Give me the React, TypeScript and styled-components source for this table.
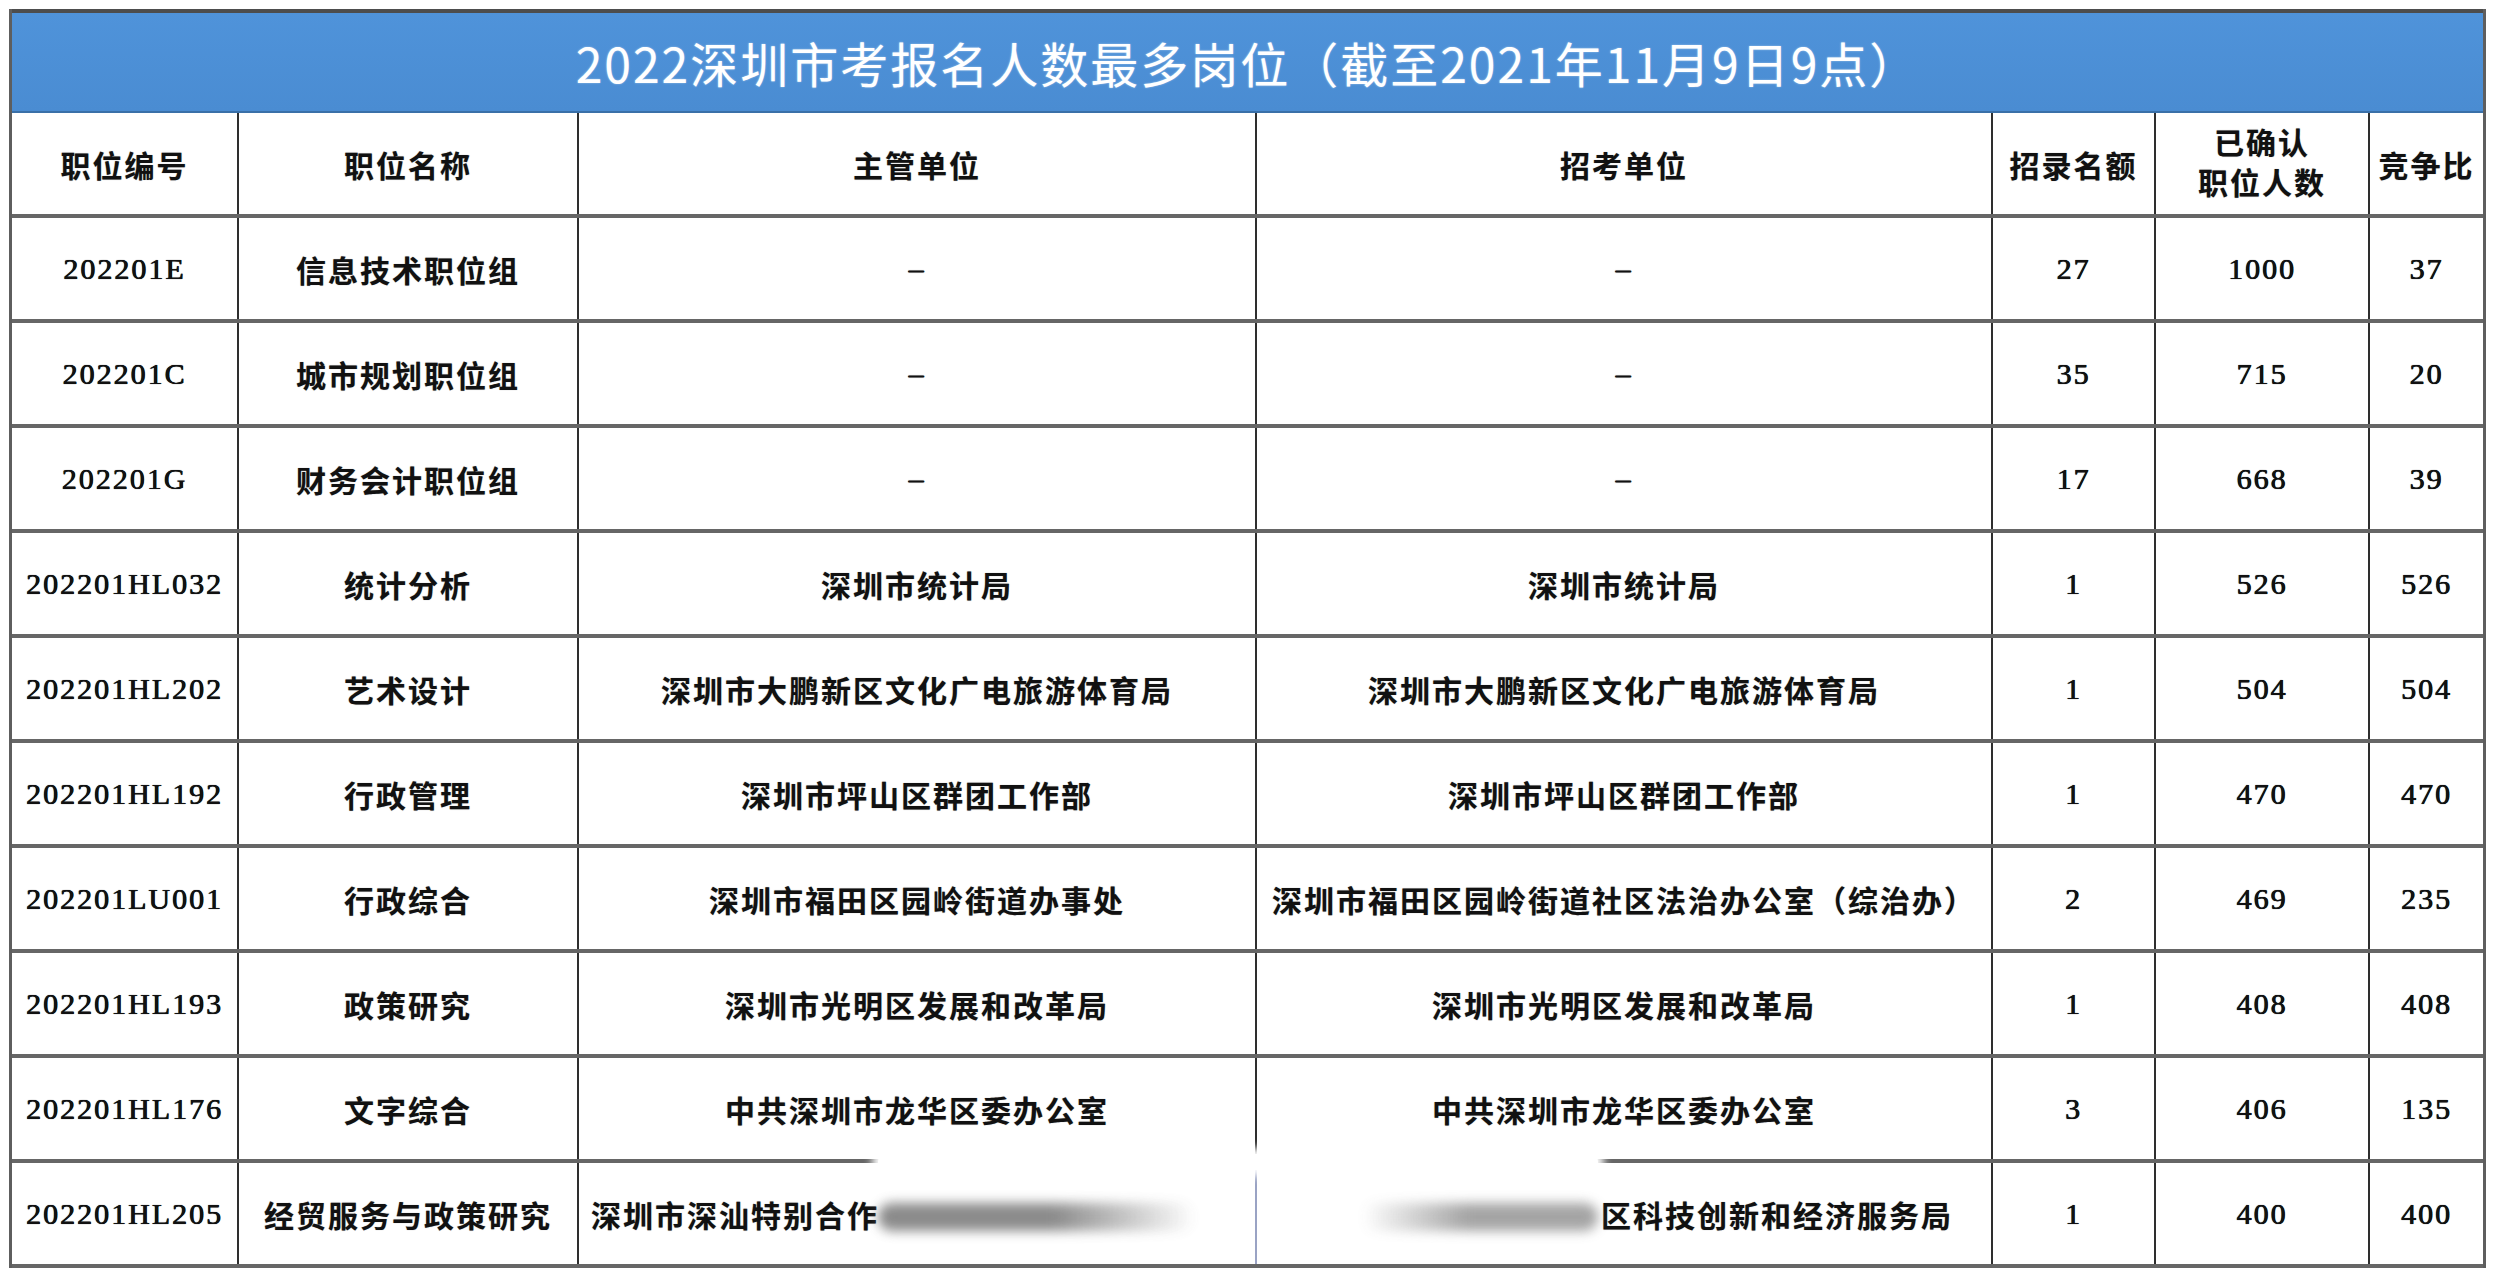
import styled, {createGlobalStyle} from "styled-components";

type Align = "center" | "left" | "right";

type RowData = {
    code: string
    name: string
    dept: string
    unit: string
    quota: string
    confirmed: string
    ratio: string
}

const rows: RowData[] = [
    {code: "202201E", name: "信息技术职位组", dept: "–", unit: "–", quota: "27", confirmed: "1000", ratio: "37"},
    {code: "202201C", name: "城市规划职位组", dept: "–", unit: "–", quota: "35", confirmed: "715", ratio: "20"},
    {code: "202201G", name: "财务会计职位组", dept: "–", unit: "–", quota: "17", confirmed: "668", ratio: "39"},
    {code: "202201HL032", name: "统计分析", dept: "深圳市统计局", unit: "深圳市统计局", quota: "1", confirmed: "526", ratio: "526"},
    {
        code: "202201HL202", name: "艺术设计", dept: "深圳市大鹏新区文化广电旅游体育局",
        unit: "深圳市大鹏新区文化广电旅游体育局", quota: "1", confirmed: "504", ratio: "504"
    },
    {
        code: "202201HL192", name: "行政管理", dept: "深圳市坪山区群团工作部",
        unit: "深圳市坪山区群团工作部", quota: "1", confirmed: "470", ratio: "470"
    },
    {
        code: "202201LU001", name: "行政综合", dept: "深圳市福田区园岭街道办事处",
        unit: "深圳市福田区园岭街道社区法治办公室（综治办）", quota: "2", confirmed: "469", ratio: "235"
    },
    {
        code: "202201HL193", name: "政策研究", dept: "深圳市光明区发展和改革局",
        unit: "深圳市光明区发展和改革局", quota: "1", confirmed: "408", ratio: "408"
    },
    {
        code: "202201HL176", name: "文字综合", dept: "中共深圳市龙华区委办公室",
        unit: "中共深圳市龙华区委办公室", quota: "3", confirmed: "406", ratio: "135"
    },
];

export default function App() {
    return <>
        <GlobalStyle/>
        <Page>
            <Table>
                <Title>2022深圳市考报名人数最多岗位（截至2021年11月9日9点）</Title>
                <Row>
                    <HeadCell $first>职位编号</HeadCell>
                    <HeadCell>职位名称</HeadCell>
                    <HeadCell>主管单位</HeadCell>
                    <HeadCell>招考单位</HeadCell>
                    <HeadCell>招录名额</HeadCell>
                    <HeadCell $tall>已确认<br/>职位人数</HeadCell>
                    <HeadCell>竞争比</HeadCell>
                </Row>
                {rows.map(r =>
                    <Row key={r.code}>
                        <Cell $first $num>{r.code}</Cell>
                        <Cell>{r.name}</Cell>
                        <Cell $num={r.dept === "–"}>{r.dept}</Cell>
                        <Cell $num={r.unit === "–"}>{r.unit}</Cell>
                        <Cell $num>{r.quota}</Cell>
                        <Cell $num>{r.confirmed}</Cell>
                        <Cell $num>{r.ratio}</Cell>
                    </Row>
                )}
                <Row>
                    <Cell $first $num>202201HL205</Cell>
                    <Cell>经贸服务与政策研究</Cell>
                    <Cell $align="left">深圳市深汕特别合作</Cell>
                    <Cell $align="right" $faint>区科技创新和经济服务局</Cell>
                    <Cell $num>1</Cell>
                    <Cell $num>400</Cell>
                    <Cell $num>400</Cell>
                    <Eraser/>
                    <Smudge $left={866} $width={318} $tone="#777777"/>
                    <Smudge $left={1350} $width={236} $tone="#959595" $reverse/>
                </Row>
            </Table>
        </Page>
    </>
}

const GlobalStyle = createGlobalStyle`
  body {
    margin: 0;
    background: #ffffff;
  }
`

const Page = styled.div`
  padding: 9px 0 0 9px;
  font-family: "Liberation Serif", "Noto Sans CJK SC", serif;
  color: #111111;
`

const Table = styled.div`
  width: 2477px;
  box-sizing: border-box;
  border-left: 3px solid #5e5e5e;
  border-right: 3px solid #5e5e5e;
`

const Title = styled.div`
  height: 104px;
  box-sizing: border-box;
  display: flex;
  align-items: center;
  justify-content: center;
  background: linear-gradient(180deg, #4f93da 0%, #4a8cd2 100%);
  border-top: 4px solid #4d4d4d;
  border-bottom: 2px solid #3a70a8;
  color: #ffffff;
  font-family: "Noto Sans CJK SC", "Noto Sans", sans-serif;
  font-size: 48px;
  letter-spacing: 2px;
  text-shadow: 0 0 2px rgba(255, 255, 255, 0.5);
`

const Row = styled.div`
  position: relative;
  display: grid;
  grid-template-columns: 225px 340px 678px 736px 163px 214px 115px;
  height: 105px;
  box-sizing: border-box;
  border-bottom: 4px solid #666666;
`

const Cell = styled.div<{ $first?: boolean; $align?: Align; $faint?: boolean; $num?: boolean }>`
  display: flex;
  align-items: center;
  justify-content: ${p => p.$align === "left" ? "flex-start" : p.$align === "right" ? "flex-end" : "center"};
  padding: ${p => p.$align === "left" ? "0 0 0 12px" : p.$align === "right" ? "0 38px 0 0" : "0"};
  border-left: ${p => p.$first ? "none" : `2px solid ${p.$faint ? "#9aa3c4" : "#2e2e2e"}`};
  font-size: 30px;
  letter-spacing: 2px;
  font-weight: ${p => p.$num ? 400 : 700};
  text-shadow: ${p => p.$num ? "0 0 0.8px #000, 0.4px 0 0 #222" : "0 0 1px rgba(0, 0, 0, 0.4)"};
  white-space: nowrap;
`

const HeadCell = styled(Cell)<{ $tall?: boolean }>`
  font-weight: 700;
  text-align: center;
  line-height: ${p => p.$tall ? "40px" : "normal"};
`

const Eraser = styled.div`
  position: absolute;
  left: 866px;
  top: -9px;
  width: 720px;
  height: 16px;
  background: #ffffff;
  box-shadow: 0 0 8px 6px #ffffff;
  border-radius: 8px;
`

const Smudge = styled.div<{ $left: number; $width: number; $tone: string; $reverse?: boolean }>`
  position: absolute;
  left: ${p => p.$left}px;
  top: 40px;
  width: ${p => p.$width}px;
  height: 28px;
  border-radius: 14px;
  background: linear-gradient(${p => p.$reverse ? "270deg" : "90deg"}, ${p => p.$tone} 0%, ${p => p.$tone} 55%, rgba(200, 200, 200, 0) 100%);
  filter: blur(6px);
  opacity: 0.85;
`
